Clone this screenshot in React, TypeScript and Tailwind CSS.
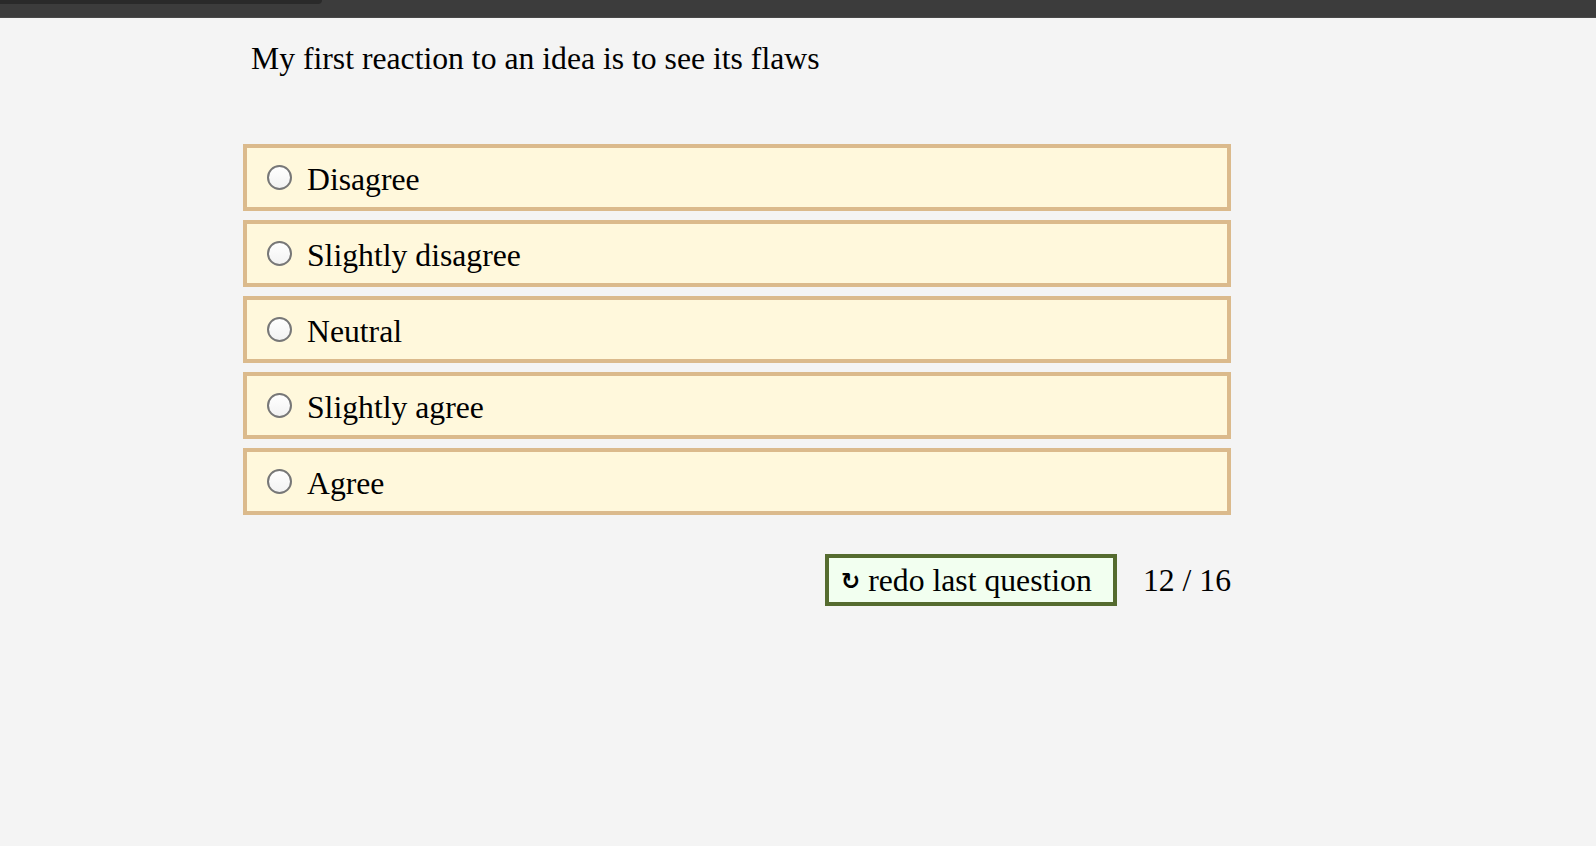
import React from "react";

const options = ["Disagree", "Slightly disagree", "Neutral", "Slightly agree", "Agree"];

export default function App() {
  return (
    <div className="min-h-screen bg-[#f4f4f4] text-black" style={{ fontFamily: '"Liberation Serif", "Times New Roman", serif' }}>
      <div className="relative h-[18px] bg-[#3c3c3c] border-b border-[#484848]">
        <div className="absolute left-0 top-0 h-[4px] w-[322px] rounded-br-[6px] bg-[#2a2a2a]" />
      </div>
      <div className="ml-[243px] w-[988px]">
        <p className="mt-[23px] pl-[8px] text-[31.7px] leading-[36.8px]">My first reaction to an idea is to see its flaws</p>
        <div className="mt-[66px] flex flex-col gap-[9px]">
          {options.map((o) => (
            <label
              key={o}
              className="flex h-[67px] items-center border-4 border-[#dbba8c] bg-[#fff8dc] pl-[20px]"
            >
              <input
                type="radio"
                name="answer"
                className="m-0 h-[25px] w-[25px] shrink-0 appearance-none rounded-full border-2 border-[#777777] bg-gradient-to-b from-white to-[#f2f2f2]"
              />
              <span className="ml-[15px] pt-[6px] text-[31.7px] leading-[36.8px]">{o}</span>
            </label>
          ))}
        </div>
        <div className="mt-[39px] flex items-center justify-end gap-[26px]">
          <button className="flex h-[52px] w-[292px] items-center border-4 border-[#556b2f] bg-[#f2fff0] pl-[12px] pt-[4px] text-[31.7px] leading-[36.8px]">
            <span className="mr-[8px] text-[23px] font-bold" style={{ fontFamily: '"DejaVu Sans", sans-serif' }}>↻</span>
            <span>redo last question</span>
          </button>
          <span className="pt-[4px] text-[31.7px] leading-[36.8px]">12 / 16</span>
        </div>
      </div>
    </div>
  );
}
